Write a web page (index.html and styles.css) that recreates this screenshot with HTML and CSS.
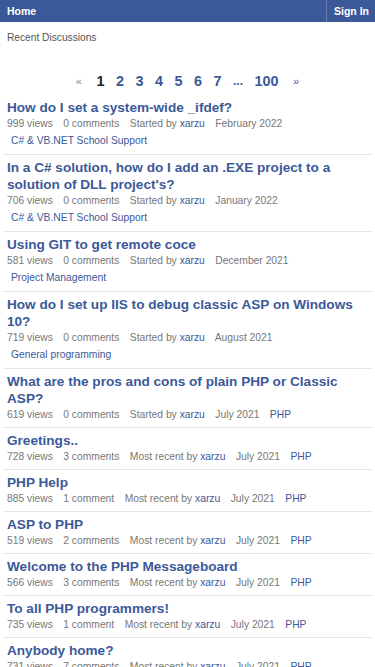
FILE: index.html
```html
<!DOCTYPE html>
<html>
<head>
    <meta charset="UTF-8">
    <title>Recent Discussions</title>
    <link rel="stylesheet" href="styles.css">
</head>
<body>
    <!-- Top bar -->
    <div class="top-bar">
        <a class="home-link" href="#">Home</a>
        <a class="sign-in" href="#">Sign In</a>
    </div>

    <div class="page-title">Recent Discussions</div>

    <!-- Pager -->
    <div class="pager">
        <a class="arrow prev" href="#">&laquo;</a>
        <span class="current">1</span>
        <a href="#">2</a>
        <a href="#">3</a>
        <a href="#">4</a>
        <a href="#">5</a>
        <a href="#">6</a>
        <a href="#">7</a>
        <span class="dots">...</span>
        <a href="#">100</a>
        <a class="arrow next" href="#">&raquo;</a>
    </div>

    <!-- Discussion list -->
    <ul class="discussions">
        <li class="item">
            <a class="item-title" href="#">How do I set a system-wide _ifdef?</a>
            <div class="meta">
                <span>999 views</span>
                <span>0 comments</span>
                <span>Started by <a href="#">xarzu</a></span>
                <span>February 2022</span>
            </div>
            <a class="category" href="#">C# &amp; VB.NET School Support</a>
        </li>
        <li class="item">
            <a class="item-title" href="#">In a C# solution, how do I add an .EXE project to a solution of DLL project's?</a>
            <div class="meta">
                <span>706 views</span>
                <span>0 comments</span>
                <span>Started by <a href="#">xarzu</a></span>
                <span>January 2022</span>
            </div>
            <a class="category" href="#">C# &amp; VB.NET School Support</a>
        </li>
        <li class="item">
            <a class="item-title" href="#">Using GIT to get remote coce</a>
            <div class="meta">
                <span>581 views</span>
                <span>0 comments</span>
                <span>Started by <a href="#">xarzu</a></span>
                <span>December 2021</span>
            </div>
            <a class="category" href="#">Project Management</a>
        </li>
        <li class="item">
            <a class="item-title" href="#">How do I set up IIS to debug classic ASP on Windows 10?</a>
            <div class="meta">
                <span>719 views</span>
                <span>0 comments</span>
                <span>Started by <a href="#">xarzu</a></span>
                <span>August 2021</span>
            </div>
            <a class="category" href="#">General programming</a>
        </li>
        <li class="item">
            <a class="item-title" href="#">What are the pros and cons of plain PHP or Classic ASP?</a>
            <div class="meta">
                <span>619 views</span>
                <span>0 comments</span>
                <span>Started by <a href="#">xarzu</a></span>
                <span>July 2021</span>
                <a href="#">PHP</a>
            </div>
        </li>
        <li class="item">
            <a class="item-title" href="#">Greetings..</a>
            <div class="meta">
                <span>728 views</span>
                <span>3 comments</span>
                <span>Most recent by <a href="#">xarzu</a></span>
                <span>July 2021</span>
                <a href="#">PHP</a>
            </div>
        </li>
        <li class="item">
            <a class="item-title" href="#">PHP Help</a>
            <div class="meta">
                <span>885 views</span>
                <span>1 comment</span>
                <span>Most recent by <a href="#">xarzu</a></span>
                <span>July 2021</span>
                <a href="#">PHP</a>
            </div>
        </li>
        <li class="item">
            <a class="item-title" href="#">ASP to PHP</a>
            <div class="meta">
                <span>519 views</span>
                <span>2 comments</span>
                <span>Most recent by <a href="#">xarzu</a></span>
                <span>July 2021</span>
                <a href="#">PHP</a>
            </div>
        </li>
        <li class="item">
            <a class="item-title" href="#">Welcome to the PHP Messageboard</a>
            <div class="meta">
                <span>566 views</span>
                <span>3 comments</span>
                <span>Most recent by <a href="#">xarzu</a></span>
                <span>July 2021</span>
                <a href="#">PHP</a>
            </div>
        </li>
        <li class="item">
            <a class="item-title" href="#">To all PHP programmers!</a>
            <div class="meta">
                <span>735 views</span>
                <span>1 comment</span>
                <span>Most recent by <a href="#">xarzu</a></span>
                <span>July 2021</span>
                <a href="#">PHP</a>
            </div>
        </li>
        <li class="item">
            <a class="item-title" href="#">Anybody home?</a>
            <div class="meta">
                <span>731 views</span>
                <span>7 comments</span>
                <span>Most recent by <a href="#">xarzu</a></span>
                <span>July 2021</span>
                <a href="#">PHP</a>
            </div>
        </li>
    </ul>
</body>
</html>
```

FILE: styles.css
```css
/* General */
body {
    margin: 0;
    font-family: 'Liberation Sans', Arial, sans-serif;
    background: #fff;
    color: #555;
}

a {
    text-decoration: none;
    color: #3b5998;
}

/* Top bar */
.top-bar {
    display: flex;
    justify-content: space-between;
    height: 22px;
    background-color: #3b5998;
}

.top-bar a {
    color: #fff;
    font-weight: bold;
    font-size: 10.5px;
    line-height: 22px;
}

.home-link {
    padding-left: 7px;
}

.sign-in {
    padding: 0 6px 0 7px;
    border-left: 1px solid rgba(255, 255, 255, 0.22);
}

.page-title {
    padding: 8px 7px 0;
    font-size: 10.2px;
    line-height: 16px;
    color: #555;
}

/* Pager */
.pager {
    display: flex;
    justify-content: center;
    align-items: center;
    gap: 11.5px;
    padding: 25px 0 4px;
    height: 20px;
    font-size: 14.4px;
    font-weight: bold;
}

.pager .current {
    color: #222;
}

.pager .dots {
    color: #3b5998;
    font-size: 12px;
}

.pager .arrow {
    font-size: 11px;
    font-weight: normal;
    margin: 0 3px;
}

.pager .prev {
    color: #888;
}

/* Discussion list */
.discussions {
    list-style: none;
    margin: 0 3px;
    padding: 0;
}

.item {
    padding: 4px 4px 4px;
    border-bottom: 1px solid #e6e6e6;
}

.item-title {
    display: block;
    font-size: 13.6px;
    font-weight: bold;
    line-height: 17px;
    color: #3b5998;
}

.meta {
    font-size: 10.3px;
    line-height: 16px;
    color: #777;
}

.meta span,
.meta > a {
    margin-right: 7.6px;
}

.category {
    display: block;
    padding-left: 4px;
    font-size: 10.3px;
    line-height: 18px;
}
```
